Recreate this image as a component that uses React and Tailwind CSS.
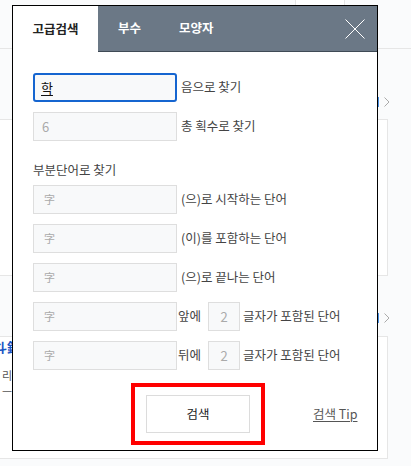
import React from "react";

const Field = ({ children, className = "" }) => (
  <div
    className={`h-[29px] border border-[#dedede] bg-[#f8f9fa] flex items-center text-[#aaa] ${className}`}
  >
    {children}
  </div>
);

const HanjaRow = ({ label }) => (
  <div className="flex items-center h-[29px]">
    <Field className="w-[144px] pl-[10px] text-[11px]">字</Field>
    <span className="ml-[4px] text-[12.5px] text-[#444]">{label}</span>
  </div>
);

const CountRow = ({ pre }) => (
  <div className="flex items-center h-[29px]">
    <Field className="w-[144px] pl-[10px] text-[11px]">字</Field>
    <span className="ml-[1px] w-[26px] text-[12.5px] text-[#444] whitespace-nowrap">{pre}</span>
    <Field className="ml-[4px] w-[32px] justify-center text-[13px] text-[#999]">2</Field>
    <span className="ml-[3px] text-[12.5px] text-[#444]">글자가 포함된 단어</span>
  </div>
);

const Chevron = () => (
  <div className="mt-[47px] h-[11px] flex items-center justify-end pr-[21px] gap-[5px]">
    <div className="w-[2px] h-[10px] bg-[#4a90e2]" />
    <svg width="6" height="10" viewBox="0 0 6 10">
      <path d="M0.5 0.5 L5 5 L0.5 9.5" stroke="#aaa" strokeWidth="1" fill="none" />
    </svg>
  </div>
);

export default function App() {
  return (
    <div className="relative w-[411px] h-[466px] overflow-hidden bg-[#fafbfc] font-['Noto_Sans_CJK_KR','Noto_Sans',sans-serif]">
      {/* background page */}
      <div className="flex flex-col">
        <div className="h-[6px] flex">
          <div className="ml-[295px] w-[50px] h-full bg-white border-x border-[#e5e5e5]" />
        </div>
        <div className="mt-[42px] h-px bg-[#e6e6e6]" />
        <Chevron />
        <div className="mt-[12px] h-[157px] mr-[23px] -ml-px bg-white border border-[#e6e6e6]" />
        <div className="-mt-[11px]">
          <Chevron />
        </div>
        <div className="mt-[13px] h-[123px] mr-[23px] -ml-px bg-white border border-[#e6e6e6] pt-[2px] text-[13px] leading-[16px]">
          <div className="font-bold text-[#1a55c4] -ml-[6px]">斗鈴</div>
          <div className="text-[#555] text-[11px] mt-[12px] ml-[2px]">리</div>
          <div className="text-[#555] text-[11px] ml-[2px]">ㅡ</div>
        </div>
      </div>

      {/* modal */}
      <div className="absolute left-[12px] top-[5px] w-[366px] h-[446px] border border-black bg-white flex flex-col">
        <div className="flex h-[46px] shrink-0">
          <div className="w-[85px] flex items-center justify-center bg-white text-[12.5px] font-bold text-[#222]">
            고급검색
          </div>
          <div className="flex-1 flex items-center bg-[#6b7886] border-b border-[#3f4a55] text-white text-[12.5px] font-bold">
            <span className="pl-[20px]">부수</span>
            <span className="pl-[38px]">모양자</span>
            <svg className="ml-auto mr-[12px]" width="20" height="20" viewBox="0 0 20 20">
              <path d="M0.5 0.5 L19.5 19.5 M19.5 0.5 L0.5 19.5" stroke="white" strokeWidth="1" fill="none" />
            </svg>
          </div>
        </div>

        <div className="flex flex-col pl-[20px] pt-[21px]">
          <div className="flex items-center h-[29px]">
            <div className="w-[144px] h-[29px] border-2 border-[#1565d0] rounded-[3px] bg-[#f8f9fa] flex items-center pl-[6px] text-[13px] text-[#111]">
              <span className="underline underline-offset-2">학</span>
            </div>
            <span className="ml-[4px] text-[12.5px] text-[#444]">음으로 찾기</span>
          </div>
          <div className="flex items-center h-[29px] mt-[10px]">
            <Field className="w-[144px] pl-[8px] text-[13px] text-[#999]">6</Field>
            <span className="ml-[4px] text-[12.5px] text-[#444]">총 획수로 찾기</span>
          </div>

          <div className="mt-[20px] text-[12.5px] leading-[17px] text-[#444]">부분단어로 찾기</div>

          <div className="mt-[7px] flex flex-col gap-[10px]">
            <HanjaRow label="(으)로 시작하는 단어" />
            <HanjaRow label="(이)를 포함하는 단어" />
            <HanjaRow label="(으)로 끝나는 단어" />
            <CountRow pre="앞에" />
            <CountRow pre="뒤에" />
          </div>

          <div className="mt-[13px] flex items-center">
            <div className="ml-[98px] w-[134px] h-[62px] border-4 border-[#ff0000] flex items-center justify-center">
              <div className="w-[104px] h-[38px] border border-[#dcdcdc] flex items-center justify-center text-[12.5px] text-[#222]">
                검색
              </div>
            </div>
            <span className="ml-[48px] text-[12.5px] text-[#555] underline underline-offset-2">검색 Tip</span>
          </div>
        </div>
      </div>
    </div>
  );
}
